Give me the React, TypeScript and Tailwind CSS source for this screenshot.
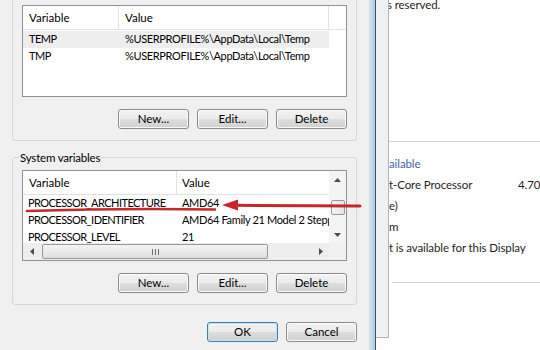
import clsx from 'clsx';

type Row = [string, string];

const userRows: Row[] = [
  ['TEMP', '%USERPROFILE%\\AppData\\Local\\Temp'],
  ['TMP', '%USERPROFILE%\\AppData\\Local\\Temp'],
];

const systemRows: Row[] = [
  ['PROCESSOR_ARCHITECTURE', 'AMD64'],
  ['PROCESSOR_IDENTIFIER', 'AMD64 Family 21 Model 2 Stepping 0, AuthenticAMD'],
  ['PROCESSOR_LEVEL', '21'],
];

function Arrow({ dir }: { dir: 'up' | 'down' | 'left' | 'right' }) {
  if (dir === 'up' || dir === 'down') {
    return (
      <svg width="7" height="4" viewBox="0 0 7 4">
        <polygon points={dir === 'up' ? '0,4 3.5,0 7,4' : '0,0 7,0 3.5,4'} fill="#4b4b4b" />
      </svg>
    );
  }
  return (
    <svg width="4" height="7" viewBox="0 0 4 7">
      <polygon points={dir === 'left' ? '4,0 0,3.5 4,7' : '0,0 4,3.5 0,7'} fill="#4b4b4b" />
    </svg>
  );
}

function Btn({ label, primary }: { label: string; primary?: boolean }) {
  return (
    <button
      className={clsx(
        'h-[20px] w-[71px] rounded-[3px] border text-[11.5px] leading-none text-black bg-[linear-gradient(180deg,#f3f3f3_0%,#ebebeb_48%,#dddddd_52%,#d0d0d0_100%)]',
        primary
          ? 'border-[#3c7fb1] shadow-[inset_0_0_0_1px_#c4e4f5]'
          : 'border-[#8a8a8a] shadow-[inset_0_0_0_1px_#fbfbfb]'
      )}
    >
      {label}
    </button>
  );
}

function UserList() {
  return (
    <div className="h-[92px] border border-[#8e9297] bg-white">
      <div className="flex h-[24px] border-b border-[#e2e2e2]">
        <div className="flex w-[96px] items-center border-r border-[#e2e2e2] pl-[6px]">Variable</div>
        <div className="flex w-[210px] items-center border-r border-[#e2e2e2] pl-[6px]">Value</div>
        <div className="flex-1" />
      </div>
      <div className="pt-[1px]">
        {userRows.map(([name, value], i) => (
          <div key={name} className={clsx('flex h-[17px] w-[306px] items-center', i === 0 && 'bg-[#eeeeee]')}>
            <div className="w-[96px] overflow-hidden whitespace-nowrap pl-[6px] text-[11px] tracking-[-0.5px]">{name}</div>
            <div className="w-[210px] overflow-hidden whitespace-nowrap pl-[6px] text-[11px] tracking-[-0.35px]">{value}</div>
          </div>
        ))}
      </div>
    </div>
  );
}

function SystemList() {
  return (
    <div className="flex h-[91px] flex-col border border-[#8e9297] bg-white">
      <div className="flex h-[72px]">
        <div className="w-[306px] overflow-hidden">
          <div className="flex h-[24px] border-b border-[#e2e2e2]">
            <div className="flex w-[154px] items-center border-r border-[#e2e2e2] pl-[6px]">Variable</div>
            <div className="flex w-[152px] items-center pl-[5px]">Value</div>
          </div>
          {systemRows.map(([name, value]) => (
            <div key={name} className="flex h-[17px] items-center">
              <div className="w-[154px] shrink-0 overflow-hidden whitespace-nowrap pl-[5px] text-[11px] tracking-[-0.55px]">{name}</div>
              <div className="w-[152px] shrink-0 overflow-hidden whitespace-nowrap pl-[5px] text-[11px] tracking-[-0.35px]">{value}</div>
            </div>
          ))}
        </div>
        <div className="flex w-[17px] flex-col bg-[#f4f4f4]">
          <div className="flex h-[17px] items-center justify-center">
            <Arrow dir="up" />
          </div>
          <div className="mt-[12px] mr-[1px] ml-[2px] h-[15px] rounded-[2px] border border-[#979797] bg-[linear-gradient(90deg,#f4f4f4,#e4e4e4)]" />
          <div className="flex-1" />
          <div className="flex h-[17px] items-center justify-center">
            <Arrow dir="down" />
          </div>
        </div>
      </div>
      <div className="flex h-[17px]">
        <div className="flex w-[306px] bg-[#eeeeee]">
          <div className="flex w-[17px] items-center justify-center">
            <Arrow dir="left" />
          </div>
          <div className="flex-1 py-[1px] pl-[2px]">
            <div className="flex h-full w-[226px] items-center justify-center gap-[2px] rounded-[2px] border border-[#979797] bg-[linear-gradient(180deg,#f5f5f5,#dedede)]">
              <span className="h-[6px] w-px bg-[#6e6e6e]" />
              <span className="h-[6px] w-px bg-[#6e6e6e]" />
              <span className="h-[6px] w-px bg-[#6e6e6e]" />
            </div>
          </div>
          <div className="flex w-[17px] items-center justify-center">
            <Arrow dir="right" />
          </div>
        </div>
        <div className="w-[17px] bg-[#f0f0f0]" />
      </div>
    </div>
  );
}

export default function App() {
  return (
    <div className="relative flex h-[350px] w-[540px] overflow-hidden bg-white font-[Lato,'Liberation_Sans',sans-serif] text-[11.5px] text-black">
      {/* dialog */}
      <div className="flex w-[369px] shrink-0 flex-col bg-[#f0f0f0] px-[12px]">
        <div className="rounded-b-[3px] border-x border-b border-[#d6d6d6] px-[9px] pt-[5px] pb-[11px]">
          <UserList />
          <div className="mt-[12px] flex justify-end gap-[8px]">
            <Btn label="New..." />
            <Btn label="Edit..." />
            <Btn label="Delete" />
          </div>
        </div>

        <fieldset className="mt-[9px] rounded-[3px] border border-[#d6d6d6]">
          <legend className="ml-[6px] px-[1px] text-[11.5px] leading-[15px] tracking-[-0.2px]">System variables</legend>
          <div className="px-[9px] pt-[5px] pb-[11px]">
            <SystemList />
            <div className="mt-[12px] flex justify-end gap-[8px]">
              <Btn label="New..." />
              <Btn label="Edit..." />
              <Btn label="Delete" />
            </div>
          </div>
        </fieldset>

        <div className="mt-[17px] flex justify-end gap-[8px]">
          <Btn label="OK" primary />
          <Btn label="Cancel" />
        </div>
      </div>

      {/* aero frame */}
      <div className="w-[6px] shrink-0 bg-[linear-gradient(90deg,#d9e6ef,#a9cde4)]" />
      <div className="w-px shrink-0 bg-[#3f5160]" />

      {/* window behind */}
      <div className="h-[338px] w-[13px] shrink-0 border-r border-b border-[#b4b4b4] bg-[#eef0f2]" />
      <div className="flex min-w-0 flex-1 flex-col overflow-hidden text-[11.5px] tracking-[-0.1px] text-[#1e1e1e]">
        <div className="-mt-[3px] -ml-[2px] whitespace-nowrap leading-[16px]">s reserved.</div>
        <div className="mt-[128px] h-px bg-[#d2d2d2]" />
        <div className="mt-[11px] whitespace-nowrap leading-[21px] text-[#4665a2]">ailable</div>
        <div className="flex whitespace-nowrap leading-[21px]">
          <span className="w-[129px] shrink-0">t-Core Processor</span>
          <span>4.70 GHz</span>
        </div>
        <div className="whitespace-nowrap leading-[21px]">e)</div>
        <div className="whitespace-nowrap leading-[21px]">m</div>
        <div className="whitespace-nowrap leading-[21px]">t is available for this Display</div>
        <div className="mt-[24px] ml-[3px] h-px bg-[#d2d2d2]" />
      </div>

      {/* red annotation */}
      <svg className="pointer-events-none absolute inset-0" width="540" height="350" viewBox="0 0 540 350">
        <path d="M27 211 Q 120 208 215 209.5" fill="none" stroke="#c8262b" strokeWidth="2.5" strokeLinecap="round" />
        <path d="M360 206 L 236 205.3" fill="none" stroke="#c8262b" strokeWidth="3" strokeLinecap="round" />
        <polygon points="222,205 238,199.5 238,210.5" fill="#c8262b" />
      </svg>
    </div>
  );
}
